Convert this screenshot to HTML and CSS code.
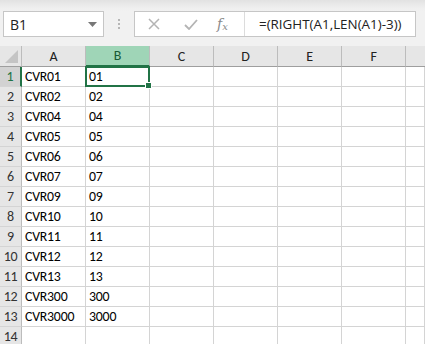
FILE: index.html
```html
<!DOCTYPE html>
<html>
<head>
<meta charset="utf-8">
<link rel="stylesheet" href="styles.css">
</head>
<body>
<div class="toolbar">
  <div class="namebox">
    <span class="nb-text">B1</span>
    <svg class="nb-arrow" width="9" height="5" viewBox="0 0 9 5"><polygon points="0,0 9,0 4.5,5" fill="#777"/></svg>
  </div>
  <div class="grip"><i></i><i></i><i></i></div>
  <div class="formulabox">
    <div class="fb-icons">
      <svg class="ic-x" width="12" height="12" viewBox="0 0 12 12"><path d="M1 1 L11 11 M11 1 L1 11" stroke="#b4b4b4" stroke-width="1.5" fill="none"/></svg>
      <svg class="ic-check" width="14" height="11" viewBox="0 0 14 11"><path d="M1 6 L5 10 L13 1" stroke="#b4b4b4" stroke-width="1.8" fill="none"/></svg>
      <span class="fx">f<sub>x</sub></span>
    </div>
    <div class="fb-text">=(RIGHT(A1,LEN(A1)-3))</div>
  </div>
</div>
<div class="sheet">
  <div class="hdr corner"><span class="tri"></span></div>
  <div class="hdr col">A</div>
  <div class="hdr col active">B</div>
  <div class="hdr col">C</div>
  <div class="hdr col">D</div>
  <div class="hdr col">E</div>
  <div class="hdr col">F</div>
  <div class="hdr col last"></div>

  <div class="rh active">1</div><div class="c">CVR01</div><div class="c sel">01</div><div class="c"></div><div class="c"></div><div class="c"></div><div class="c"></div><div class="c"></div>
  <div class="rh">2</div><div class="c">CVR02</div><div class="c">02</div><div class="c"></div><div class="c"></div><div class="c"></div><div class="c"></div><div class="c"></div>
  <div class="rh">3</div><div class="c">CVR04</div><div class="c">04</div><div class="c"></div><div class="c"></div><div class="c"></div><div class="c"></div><div class="c"></div>
  <div class="rh">4</div><div class="c">CVR05</div><div class="c">05</div><div class="c"></div><div class="c"></div><div class="c"></div><div class="c"></div><div class="c"></div>
  <div class="rh">5</div><div class="c">CVR06</div><div class="c">06</div><div class="c"></div><div class="c"></div><div class="c"></div><div class="c"></div><div class="c"></div>
  <div class="rh">6</div><div class="c">CVR07</div><div class="c">07</div><div class="c"></div><div class="c"></div><div class="c"></div><div class="c"></div><div class="c"></div>
  <div class="rh">7</div><div class="c">CVR09</div><div class="c">09</div><div class="c"></div><div class="c"></div><div class="c"></div><div class="c"></div><div class="c"></div>
  <div class="rh">8</div><div class="c">CVR10</div><div class="c">10</div><div class="c"></div><div class="c"></div><div class="c"></div><div class="c"></div><div class="c"></div>
  <div class="rh">9</div><div class="c">CVR11</div><div class="c">11</div><div class="c"></div><div class="c"></div><div class="c"></div><div class="c"></div><div class="c"></div>
  <div class="rh">10</div><div class="c">CVR12</div><div class="c">12</div><div class="c"></div><div class="c"></div><div class="c"></div><div class="c"></div><div class="c"></div>
  <div class="rh">11</div><div class="c">CVR13</div><div class="c">13</div><div class="c"></div><div class="c"></div><div class="c"></div><div class="c"></div><div class="c"></div>
  <div class="rh">12</div><div class="c">CVR300</div><div class="c">300</div><div class="c"></div><div class="c"></div><div class="c"></div><div class="c"></div><div class="c"></div>
  <div class="rh">13</div><div class="c">CVR3000</div><div class="c">3000</div><div class="c"></div><div class="c"></div><div class="c"></div><div class="c"></div><div class="c"></div>
  <div class="rh">14</div><div class="c"></div><div class="c"></div><div class="c"></div><div class="c"></div><div class="c"></div><div class="c"></div><div class="c"></div>
</div>
</body>
</html>
```

FILE: styles.css
```css
html, body {
  margin: 0;
  padding: 0;
  background: #ffffff;
  overflow: hidden;
}
body {
  width: 425px;
  height: 344px;
  font-family: Carlito, Lato, "Liberation Sans", sans-serif;
}
.toolbar {
  height: 46px;
  box-sizing: border-box;
  padding: 11px 0 0 3px;
  display: flex;
  align-items: flex-start;
  background: linear-gradient(#e2e2e2 0px, #efefef 8px, #f1f1f1 12px, #f1f1f1 100%);
}
.namebox {
  width: 101px;
  height: 26px;
  box-sizing: border-box;
  background: #fff;
  border: 1px solid #c6c6c6;
  display: flex;
  align-items: center;
  justify-content: space-between;
  padding: 0 6px 0 6px;
}
.nb-text {
  font-family: "Open Sans", sans-serif;
  font-size: 14px;
  color: #222;
}
.nb-arrow { margin-top: 1px; }
.grip {
  width: 30px;
  height: 26px;
  display: flex;
  flex-direction: column;
  align-items: center;
  justify-content: center;
  gap: 2px;
}
.grip i {
  display: block;
  width: 2px;
  height: 2px;
  background: #b6b6b6;
}
.formulabox {
  width: 282px;
  height: 26px;
  box-sizing: border-box;
  background: #fff;
  border: 1px solid #c6c6c6;
  display: flex;
  align-items: center;
}
.fb-icons {
  width: 110px;
  height: 24px;
  box-sizing: border-box;
  border-right: 1px solid #dcdcdc;
  display: flex;
  align-items: center;
  padding-left: 13px;
}
.ic-x { margin-right: 24px; }
.ic-check { margin-right: 19px; }
.fx {
  font-family: "DejaVu Serif", serif;
  font-style: italic;
  font-size: 14px;
  color: #8a8a8a;
}
.fx sub { font-size: 10px; vertical-align: -1px; }
.fb-text {
  padding-left: 14px;
  font-family: "Open Sans", sans-serif;
  font-size: 13.4px;
  color: #222;
  white-space: nowrap;
}
.sheet {
  display: grid;
  grid-template-columns: 22px repeat(6, 64px) 1fr;
  grid-template-rows: 21px;
  grid-auto-rows: 20px;
  font-size: 13.8px;
  letter-spacing: -0.2px;
  color: #000;
}
.hdr {
  background: #e6e6e6;
  border-right: 1px solid #bcbcbc;
  border-bottom: 1px solid #9e9e9e;
  box-sizing: border-box;
  display: flex;
  align-items: center;
  justify-content: center;
  color: #222;
  font-size: 14px;
}
.hdr.last { border-right: none; }
.hdr.col.active {
  background: #9fd5b7;
  color: #1a5a36;
  border-bottom: 2px solid #217346;
}
.corner {
  position: relative;
  background: #e6e6e6;
}
.tri {
  position: absolute;
  right: 3px;
  bottom: 3px;
  width: 0;
  height: 0;
  border-left: 13px solid transparent;
  border-bottom: 13px solid #c4c4c4;
}
.rh {
  background: #e6e6e6;
  border-right: 1px solid #bcbcbc;
  border-bottom: 1px solid #d4d4d4;
  box-sizing: border-box;
  display: flex;
  align-items: center;
  justify-content: center;
  color: #333;
  font-size: 14px;
  letter-spacing: -0.3px;
}
.rh.active {
  background: #d2d2d2;
  color: #217346;
  border-right: 2px solid #217346;
}
.c {
  border-right: 1px solid #d4d4d4;
  border-bottom: 1px solid #d4d4d4;
  box-sizing: border-box;
  padding-left: 3px;
  display: flex;
  align-items: center;
  white-space: nowrap;
}
.c.sel {
  position: relative;
}
.c.sel::after {
  content: "";
  position: absolute;
  left: -1px;
  top: -1px;
  right: -1px;
  bottom: -1px;
  border: 2px solid #217346;
}
.c.sel::before {
  content: "";
  position: absolute;
  right: -3px;
  bottom: -3px;
  width: 5px;
  height: 5px;
  background: #217346;
  border: 1px solid #fff;
  z-index: 1;
}
```
